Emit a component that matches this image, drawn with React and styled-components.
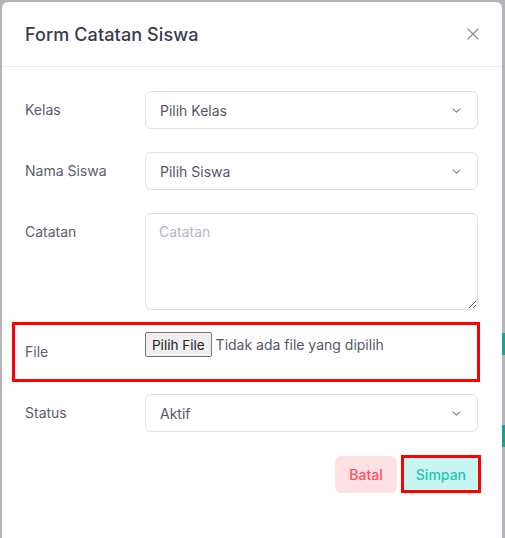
import React from "react";
import styled, { createGlobalStyle } from "styled-components";

const GlobalStyle = createGlobalStyle`
  html, body {
    margin: 0;
    padding: 0;
    background: #b4b4b8;
  }
  * {
    box-sizing: border-box;
  }
`;

const App = () => {
  return (
    <>
      <GlobalStyle />
      <Backdrop>
        <PeekTab $top={333} />
        <PeekTab $top={425} />
        <Modal>
          <Header>
            <Title>Form Catatan Siswa</Title>
            <CloseButton aria-label="close">
              <svg width="12" height="12" viewBox="0 0 12 12">
                <path d="M1 1L11 11M11 1L1 11" stroke="#8a8d93" strokeWidth="1.2" strokeLinecap="round" />
              </svg>
            </CloseButton>
          </Header>
          <Body>
            <Row>
              <Label>Kelas</Label>
              <Select>
                <span>Pilih Kelas</span>
                <Chevron />
              </Select>
            </Row>
            <Row>
              <Label>Nama Siswa</Label>
              <Select>
                <span>Pilih Siswa</span>
                <Chevron />
              </Select>
            </Row>
            <Row>
              <Label>Catatan</Label>
              <TextArea placeholder="Catatan" />
            </Row>
            <HighlightRow>
              <Label>File</Label>
              <FilePicker>
                <FileButton type="button">Pilih File</FileButton>
                <FileName>Tidak ada file yang dipilih</FileName>
              </FilePicker>
            </HighlightRow>
            <Row>
              <Label>Status</Label>
              <Select>
                <span>Aktif</span>
                <Chevron />
              </Select>
            </Row>
            <Footer>
              <ActionButton $variant="danger">Batal</ActionButton>
              <ActionButton $variant="success" $marked>Simpan</ActionButton>
            </Footer>
          </Body>
        </Modal>
      </Backdrop>
    </>
  );
};

const Chevron = () => (
  <svg width="9" height="5" viewBox="0 0 9 5">
    <path d="M1 0.8L4.5 4.2L8 0.8" fill="none" stroke="#7d80a0" strokeWidth="1.1" strokeLinecap="round" strokeLinejoin="round" />
  </svg>
);

const Backdrop = styled.div`
  position: relative;
  width: 505px;
  height: 538px;
  padding: 2px 3px 0 2px;
  overflow: hidden;
  font-family: Inter, "Noto Sans", sans-serif;
`;

const PeekTab = styled.div`
  position: absolute;
  right: 0;
  top: ${(p) => p.$top}px;
  width: 3px;
  height: 22px;
  background: #1e9e94;
`;

const Modal = styled.div`
  position: relative;
  width: 500px;
  height: 560px;
  background: #fff;
  border-radius: 6px;
`;

const Header = styled.div`
  height: 65px;
  display: flex;
  align-items: center;
  justify-content: space-between;
  padding: 0 23px 0 23px;
  border-bottom: 1px solid #e9e9ef;
`;

const Title = styled.h5`
  margin: 0;
  font-size: 18px;
  font-weight: 500;
  color: #383a50;
  letter-spacing: 0.1px;
`;

const CloseButton = styled.button`
  border: 0;
  background: none;
  padding: 0;
  display: flex;
  cursor: pointer;
`;

const Body = styled.div`
  display: flex;
  flex-direction: column;
  gap: 23px;
  padding: 24px 24px 0 23px;
`;

const Row = styled.div`
  display: grid;
  grid-template-columns: 120px 1fr;
  align-items: start;
`;

const HighlightRow = styled(Row)`
  border: 3px solid #ff0000;
  margin: -11px -2px -11px -13px;
  padding: 8px 0 8px 10px;
`;

const Label = styled.label`
  line-height: 38px;
  font-size: 14px;
  color: #5b5d70;
`;

const Select = styled.div`
  height: 38px;
  display: flex;
  align-items: center;
  justify-content: space-between;
  padding: 0 16px 0 14px;
  border: 1px solid #e1e1ec;
  border-radius: 6px;
  font-size: 14px;
  color: #55576b;
`;

const TextArea = styled.textarea`
  height: 97px;
  resize: vertical;
  padding: 9px 13px;
  border: 1px solid #e1e1ec;
  border-radius: 6px;
  font-family: Inter, "Noto Sans", sans-serif;
  font-size: 14px;
  color: #55576b;
  outline: none;
  &::placeholder {
    color: #b6b6c4;
  }
`;

const FilePicker = styled.div`
  display: flex;
  align-items: center;
  gap: 4px;
  margin-top: -1px;
`;

const FileButton = styled.button`
  height: 25px;
  padding: 0 6px;
  border: 1px solid #767676;
  border-radius: 2px;
  background: #efefef;
  font-family: Inter, "Noto Sans", sans-serif;
  font-size: 13.5px;
  color: #222;
`;

const FileName = styled.span`
  font-size: 14px;
  color: #55576b;
`;

const Footer = styled.div`
  display: flex;
  justify-content: flex-end;
  align-items: center;
  gap: 4px;
  margin-right: -3px;
`;

const ActionButton = styled.button`
  height: ${(p) => (p.$marked ? "38px" : "37px")};
  padding: 0 ${(p) => (p.$marked ? "12px" : "14px")};
  border: ${(p) => (p.$marked ? "3px solid #ff0000" : "0")};
  border-radius: ${(p) => (p.$marked ? "0" : "6px")};
  background: ${(p) => (p.$variant === "danger" ? "#ffe0e4" : "#c8f5f2")};
  color: ${(p) => (p.$variant === "danger" ? "#ff4d5f" : "#24c6b6")};
  font-family: Inter, "Noto Sans", sans-serif;
  font-size: 14px;
  font-weight: 500;
  cursor: pointer;
`;

export default App;
